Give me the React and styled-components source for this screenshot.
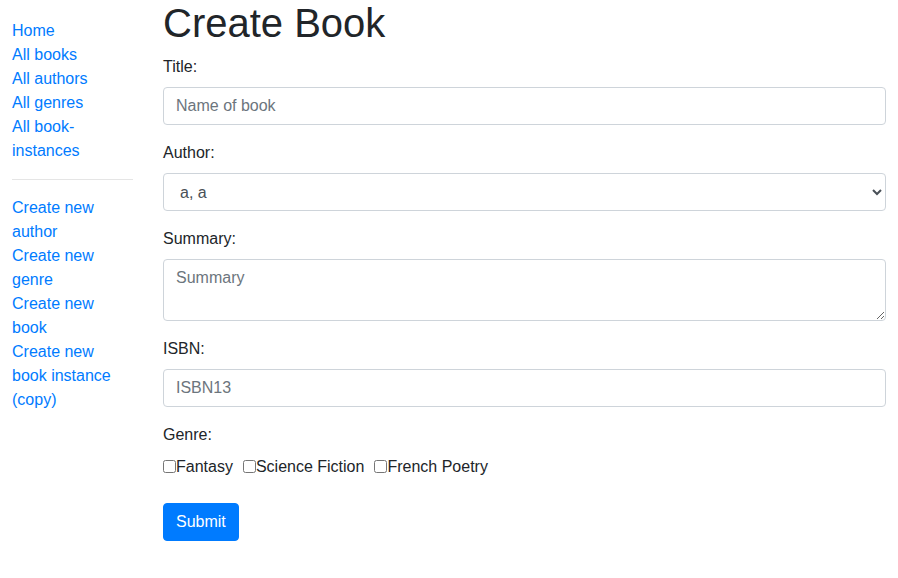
import React from "react";
import styled, { createGlobalStyle } from "styled-components";

const Global = createGlobalStyle`
  *, *::before, *::after { box-sizing: border-box; }
  html, body { margin: 0; padding: 0; background: #fff; }
  body {
    font-family: "Liberation Sans", Arial, sans-serif;
    font-size: 16px;
    line-height: 1.5;
    color: #212529;
  }
`;

const Page = styled.div`
  display: grid;
  grid-template-columns: 121px 723px;
  column-gap: 30px;
  padding: 0 12px;
`;

const Sidebar = styled.nav`
  padding-top: 19px;
`;

const NavList = styled.ul`
  list-style: none;
  margin: 0;
  padding: 0 10px 0 0;
`;

const NavLink = styled.a`
  color: #007bff;
  text-decoration: none;
  cursor: pointer;
`;

const Divider = styled.hr`
  margin: 16px 0;
  border: 0;
  border-top: 1px solid rgba(0, 0, 0, 0.1);
`;

const Main = styled.main``;

const Title = styled.h1`
  margin: -1px 0 8px;
  font-size: 40px;
  font-weight: 500;
  line-height: 1.2;
`;

const FormGroup = styled.div`
  margin-bottom: 16px;
`;

const Label = styled.label`
  display: inline-block;
  margin-bottom: 8px;
`;

const controlCss = `
  display: block;
  width: 100%;
  padding: 6px 12px;
  font-family: "Liberation Sans", Arial, sans-serif;
  font-size: 16px;
  line-height: 1.5;
  color: #495057;
  background: #fff;
  border: 1px solid #ced4da;
  border-radius: 4px;
  margin: 0;
  &::placeholder { color: #6c757d; opacity: 1; }
`;

const Input = styled.input`
  ${controlCss}
  height: 38px;
`;

const Select = styled.select`
  ${controlCss}
  height: 38px;
`;

const TextArea = styled.textarea`
  ${controlCss}
  height: 62px;
  resize: vertical;
`;

const CheckItem = styled.div`
  display: inline;
  padding-right: 10px;
`;

const Checkbox = styled.input`
  margin: 0;
  width: 13px;
  height: 13px;
  vertical-align: -1px;
`;

const Button = styled.button`
  display: inline-block;
  padding: 6px 12px;
  font-family: "Liberation Sans", Arial, sans-serif;
  font-size: 16px;
  line-height: 1.5;
  color: #fff;
  background: #007bff;
  border: 1px solid #007bff;
  border-radius: 4px;
  cursor: pointer;
`;

const links1 = ["Home", "All books", "All authors", "All genres", "All book-instances"];
const links2 = ["Create new author", "Create new genre", "Create new book", "Create new book instance (copy)"];
const genres = ["Fantasy", "Science Fiction", "French Poetry"];

export default function App() {
  return (
    <>
      <Global />
      <Page>
        <Sidebar>
          <NavList>
            {links1.map((l) => (
              <li key={l}><NavLink href="#">{l}</NavLink></li>
            ))}
          </NavList>
          <Divider />
          <NavList>
            {links2.map((l) => (
              <li key={l}><NavLink href="#">{l}</NavLink></li>
            ))}
          </NavList>
        </Sidebar>
        <Main>
          <Title>Create Book</Title>
          <form onSubmit={(e) => e.preventDefault()}>
            <FormGroup>
              <Label htmlFor="title">Title:</Label>
              <Input id="title" type="text" placeholder="Name of book" />
            </FormGroup>
            <FormGroup>
              <Label htmlFor="author">Author:</Label>
              <Select id="author" defaultValue="a">
                <option value="a">a, a</option>
              </Select>
            </FormGroup>
            <FormGroup>
              <Label htmlFor="summary">Summary:</Label>
              <TextArea id="summary" placeholder="Summary" rows={2} />
            </FormGroup>
            <FormGroup>
              <Label htmlFor="isbn">ISBN:</Label>
              <Input id="isbn" type="text" placeholder="ISBN13" />
            </FormGroup>
            <FormGroup>
              <Label>Genre:</Label>
              <div>
                {genres.map((g, i) => (
                  <CheckItem key={g}>
                    <Checkbox type="checkbox" id={`g${i}`} />
                    <Label htmlFor={`g${i}`}>{g}</Label>
                  </CheckItem>
                ))}
              </div>
            </FormGroup>
            <Button type="submit">Submit</Button>
          </form>
        </Main>
      </Page>
    </>
  );
}
